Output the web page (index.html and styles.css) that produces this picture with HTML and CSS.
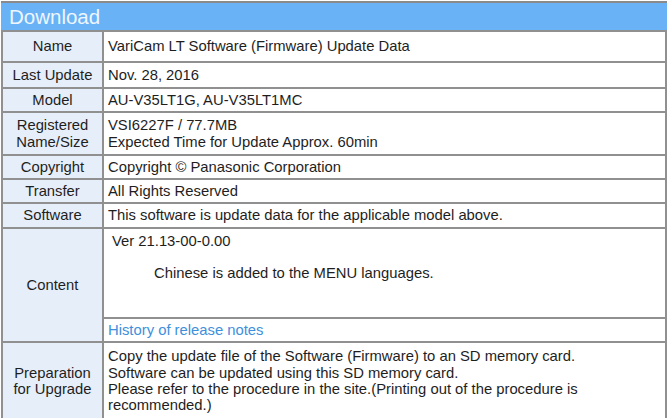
FILE: index.html
```html
<!DOCTYPE html>
<html>
<head>
<meta charset="utf-8">
<link rel="stylesheet" href="styles.css">
</head>
<body>
<div class="page">
  <div class="title">Download</div>
  <table class="dl">
    <colgroup><col class="c-label"><col></colgroup>
    <tr class="r-name"><th>Name</th><td>VariCam LT Software (Firmware) Update Data</td></tr>
    <tr class="r-last"><th>Last Update</th><td>Nov. 28, 2016</td></tr>
    <tr class="r-model"><th>Model</th><td>AU-V35LT1G, AU-V35LT1MC</td></tr>
    <tr class="r-reg"><th>Registered<br>Name/Size</th><td>VSI6227F / 77.7MB<br>Expected Time for Update Approx. 60min</td></tr>
    <tr class="r-copy"><th>Copyright</th><td>Copyright © Panasonic Corporation</td></tr>
    <tr class="r-tr"><th>Transfer</th><td>All Rights Reserved</td></tr>
    <tr class="r-sw"><th>Software</th><td>This software is update data for the applicable model above.</td></tr>
    <tr class="r-content"><th rowspan="2">Content</th><td class="content"><div class="ver">Ver 21.13-00-0.00</div><div class="note">Chinese is added to the MENU languages.</div></td></tr>
    <tr class="r-hist"><td><a class="link" href="#">History of release notes</a></td></tr>
    <tr class="r-prep"><th>Preparation<br>for Upgrade</th><td>Copy the update file of the Software (Firmware) to an SD memory card.<br>Software can be updated using this SD memory card.<br>Please refer to the procedure in the site.(Printing out of the procedure is recommended.)</td></tr>
  </table>
</div>
</body>
</html>
```

FILE: styles.css
```css
html, body {
  margin: 0;
  padding: 0;
  background: #ffffff;
}
body {
  font-family: "Liberation Sans", Arial, sans-serif;
  color: #1e1e1e;
}
.page {
  width: 668px;
  padding: 0 1px 0 1px;
  box-sizing: border-box;
}
.title {
  border-top: 2px solid #8a8a8a;
  margin-top: 1px;
  height: 27px;
  background: #69b2f6;
  color: #eef6ff;
  font-size: 20.5px;
  line-height: 27px;
  padding-left: 8px;
}
.dl {
  width: 100%;
  border-collapse: collapse;
  font-size: 14.8px;
  line-height: 16.3px;
}
.c-label { width: 101px; }
.dl th, .dl td {
  border: 2px solid #909090;
  padding: 0 4px;
}
.dl th {
  background: #e6eefa;
  font-weight: normal;
  text-align: center;
  vertical-align: middle;
}
.dl td {
  background: #ffffff;
  text-align: left;
  vertical-align: middle;
}
.r-name { height: 31px; }
.r-last { height: 26px; }
.r-model { height: 24px; }
.r-reg { height: 43px; }
.r-copy { height: 24px; }
.r-tr { height: 24px; }
.r-sw { height: 25px; }
.r-content { height: 90px; }
.r-hist { height: 24px; }
.r-prep { height: 78px; }
.dl td.content {
  vertical-align: top;
  padding-top: 4px;
  padding-left: 8px;
}
.note {
  margin-top: 16px;
  padding-left: 42px;
}
.link {
  color: #3e8fdc;
  text-decoration: none;
}
```
